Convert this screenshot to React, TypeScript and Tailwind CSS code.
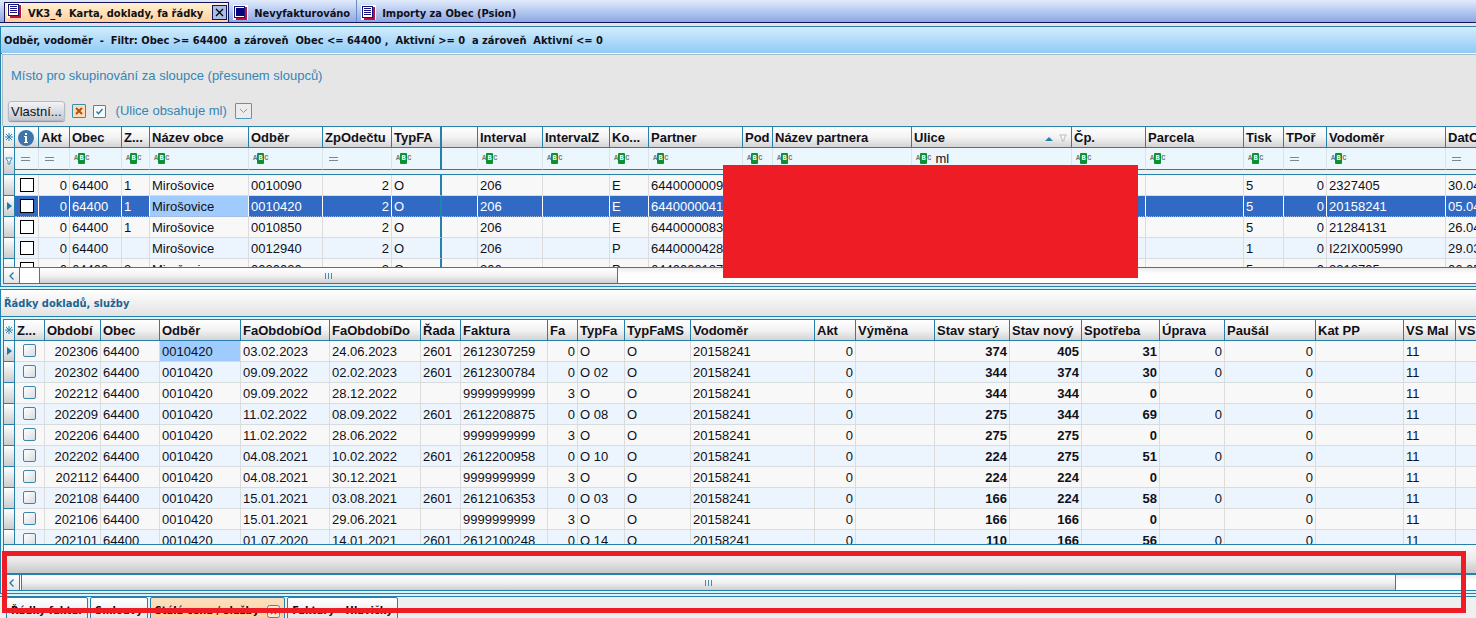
import { useState } from "react";
import { clsx } from "clsx";

type Column = {
    key: string;
    title: string;
    width: number;
    right?: boolean;
    bold?: boolean;
    filter?: "abc" | "eq";
};

type Row = Record<string, string>;

const INDICATOR_WIDTH = 11;

const meterColumns: Column[] = [
    { key: "check", title: "", width: 24, filter: "eq" },
    { key: "akt", title: "Akt", width: 31, right: true, filter: "eq" },
    { key: "obec", title: "Obec", width: 52, filter: "abc" },
    { key: "z", title: "Z...", width: 28, filter: "abc" },
    { key: "nazev", title: "Název obce", width: 99, filter: "abc" },
    { key: "odber", title: "Odběr", width: 74, filter: "abc" },
    { key: "zp", title: "ZpOdečtu", width: 69, right: true, filter: "eq" },
    { key: "typ", title: "TypFA", width: 50, filter: "abc" },
    { key: "blank", title: "", width: 36 },
    { key: "interval", title: "Interval", width: 65, filter: "abc" },
    { key: "intervalZ", title: "IntervalZ", width: 67, filter: "abc" },
    { key: "ko", title: "Ko...", width: 39, filter: "abc" },
    { key: "partner", title: "Partner", width: 94, filter: "abc" },
    { key: "pod", title: "Pod", width: 30, filter: "abc" },
    { key: "nazevP", title: "Název partnera", width: 139, filter: "abc" },
    { key: "ulice", title: "Ulice", width: 160, filter: "abc" },
    { key: "cp", title: "Čp.", width: 74, filter: "abc" },
    { key: "parcela", title: "Parcela", width: 98, filter: "abc" },
    { key: "tisk", title: "Tisk", width: 40, filter: "abc" },
    { key: "tpor", title: "TPoř", width: 43, right: true, filter: "eq" },
    { key: "vodomer", title: "Vodoměr", width: 119, filter: "abc" },
    { key: "dat", title: "DatO", width: 80, filter: "eq" },
];

const meter = (z: string, odber: string, ko: string, partner: string, tisk: string, vodomer: string, dat: string): Row => ({
    akt: "0", obec: "64400", nazev: "Mirošovice", zp: "2", typ: "O", interval: "206", tpor: "0",
    z, odber, ko, partner, tisk, vodomer, dat,
});

const meterRows: Row[] = [
    meter("1", "0010090", "E", "6440000009", "5", "2327405", "30.04"),
    meter("1", "0010420", "E", "6440000041", "5", "20158241", "05.04"),
    meter("1", "0010850", "E", "6440000083", "5", "21284131", "26.04"),
    meter("", "0012940", "P", "6440000428", "1", "I22IX005990", "29.03"),
    meter("2", "0020020", "P", "6440000127", "5", "2312795", "06.05"),
];

const lineColumns: Column[] = [
    { key: "check", title: "Z...", width: 30 },
    { key: "obdobi", title: "Období", width: 56, right: true },
    { key: "obec", title: "Obec", width: 59 },
    { key: "odber", title: "Odběr", width: 81 },
    { key: "od", title: "FaObdobíOd", width: 89 },
    { key: "do", title: "FaObdobíDo", width: 91 },
    { key: "rada", title: "Řada", width: 40 },
    { key: "faktura", title: "Faktura", width: 87 },
    { key: "fa", title: "Fa", width: 30, right: true },
    { key: "typ", title: "TypFa", width: 47 },
    { key: "typMS", title: "TypFaMS", width: 66 },
    { key: "vodomer", title: "Vodoměr", width: 124 },
    { key: "akt", title: "Akt", width: 41, right: true },
    { key: "vymena", title: "Výměna", width: 79 },
    { key: "stary", title: "Stav starý", width: 75, right: true, bold: true },
    { key: "novy", title: "Stav nový", width: 72, right: true, bold: true },
    { key: "spotreba", title: "Spotřeba", width: 78, right: true, bold: true },
    { key: "uprava", title: "Úprava", width: 65, right: true },
    { key: "pausal", title: "Paušál", width: 91, right: true },
    { key: "kat", title: "Kat PP", width: 88 },
    { key: "vsMal", title: "VS Mal", width: 52 },
    { key: "vs", title: "VS", width: 60 },
];

// rows without an invoice series are readings that were not billed yet
const line = (obdobi: string, od: string, to: string, faktura: string, typ: string, stary: string, novy: string, spotreba: string): Row => {
    const billed = faktura !== "9999999999";
    return {
        obec: "64400", odber: "0010420", typMS: "O", vodomer: "20158241", akt: "0", pausal: "0", vsMal: "11",
        rada: billed ? "2601" : "",
        fa: billed ? "0" : "3",
        uprava: billed ? "0" : "",
        obdobi, od, do: to, faktura, typ, stary, novy, spotreba,
    };
};

const lineRows: Row[] = [
    line("202306", "03.02.2023", "24.06.2023", "2612307259", "O", "374", "405", "31"),
    line("202302", "09.09.2022", "02.02.2023", "2612300784", "O 02", "344", "374", "30"),
    line("202212", "09.09.2022", "28.12.2022", "9999999999", "O", "344", "344", "0"),
    line("202209", "11.02.2022", "08.09.2022", "2612208875", "O 08", "275", "344", "69"),
    line("202206", "11.02.2022", "28.06.2022", "9999999999", "O", "275", "275", "0"),
    line("202202", "04.08.2021", "10.02.2022", "2612200958", "O 10", "224", "275", "51"),
    line("202112", "04.08.2021", "30.12.2021", "9999999999", "O", "224", "224", "0"),
    line("202108", "15.01.2021", "03.08.2021", "2612106353", "O 03", "166", "224", "58"),
    line("202106", "15.01.2021", "29.06.2021", "9999999999", "O", "166", "166", "0"),
    line("202101", "01.07.2020", "14.01.2021", "2612100248", "O 14", "110", "166", "56"),
];

const tahoma = "font-['DejaVu_Sans_Condensed','DejaVu_Sans',sans-serif] text-[11px] font-bold whitespace-pre";

function DocIcon({ filled }: { filled?: boolean }) {
    return (
        <svg width="15" height="15" viewBox="0 0 15 15" shapeRendering="crispEdges" className="shrink-0" aria-hidden="true">
            <rect x="0" y="0" width="15" height="15" fill="#fff" />
            <path d="M13 2v12H3" fill="none" stroke="#c0103a" strokeWidth="2" />
            <rect x="1.5" y="1.5" width="10" height="11" fill="#fff" stroke="#14147c" />
            {filled ? (
                <rect x="3" y="3" width="8" height="8" fill="#06067a" />
            ) : (
                <path d="M3 3.5h7M3 5.5h7M3 7.5h7M3 9.5h7" stroke="#14147c" />
            )}
        </svg>
    );
}

function StarIcon() {
    return (
        <svg width="8" height="8" viewBox="0 0 8 8" className="mx-auto" aria-hidden="true">
            <path d="M4 0v8M0 4h8M1 1l6 6M7 1L1 7" stroke="#2b86bd" />
        </svg>
    );
}

function InfoIcon() {
    return (
        <svg width="16" height="16" viewBox="0 0 16 16" className="-ml-[2px]" aria-hidden="true">
            <circle cx="8" cy="8" r="8" fill="#3a75ad" />
            <rect x="7" y="3" width="2" height="2" fill="#fff" />
            <path d="M6 6h3v6h1v1H6v-1h1V7H6z" fill="#fff" />
        </svg>
    );
}

function FunnelIcon({ color }: { color: string }) {
    return (
        <svg width="8" height="8" viewBox="0 0 8 8" className="shrink-0" aria-hidden="true">
            <path d="M0.800 1h6.400L5 4.200V7H3V4.200z" fill="#fff" stroke={color} />
        </svg>
    );
}

function CurrentRowMark() {
    return (
        <svg width="5" height="8" viewBox="0 0 5 8" className="mx-auto" aria-hidden="true">
            <path d="M0 0l5 4-5 4z" fill="#1a7ba8" />
        </svg>
    );
}

function ContainsIcon() {
    return (
        <span aria-hidden="true" className="flex shrink-0 items-center font-['Liberation_Mono',monospace] text-[7px] leading-none font-bold text-[#6b7b7b]">
            A<span className="flex h-[11px] w-[7px] items-center justify-center rounded-[1px] bg-[#0c9030] text-white">B</span>C
        </span>
    );
}

function EqualsIcon() {
    return <span aria-hidden="true" className="ml-[2px] h-[4px] w-[9px] shrink-0 border-y border-[#7c8890]" />;
}

function Grip() {
    return <span className="h-[6px] w-[7px] bg-[repeating-linear-gradient(90deg,#3b8dbd_0px,#3b8dbd_1px,transparent_1px,transparent_3px)]" />;
}

function ScrollBar({ offset, size, rest }: { offset: number; size: number; rest: number }) {
    return (
        <div className="flex h-[15px] shrink-0 bg-white">
            <button aria-label="Posunout vlevo" className="flex w-4 items-center justify-center border-r border-[#2b80b0] bg-linear-to-b from-white to-[#e4e4e4]">
                <svg width="5" height="8" viewBox="0 0 5 8" aria-hidden="true">
                    <path d="M4.500 0.500L1 4l3.500 3.500" fill="none" stroke="#1f78a8" strokeWidth="1.300" />
                </svg>
            </button>
            <div className="shrink-0" style={{ width: offset }} />
            <div className="flex basis-0 items-center justify-center border-x border-[#2b80b0] bg-linear-to-b from-white via-[#f1f1f1] to-[#cfcfcf]" style={{ flexGrow: size }}>
                <Grip />
            </div>
            <div className="basis-0 bg-linear-to-b from-[#ececec] to-white to-40%" style={{ flexGrow: rest }} />
        </div>
    );
}

const headCell = "h-[22px] overflow-hidden border-y border-r border-[#2580ac] bg-linear-to-b from-white via-[#f3f3f3] to-[#d4d4d4] px-[2px] pt-[2px] pb-0 text-left font-bold text-[#101018]";
const indicator = "border-r border-b border-[#2580ac] bg-linear-to-b from-white to-[#cdcdcd] p-0";

function Grid({ columns, rows, current, focusKey, filters, thickAfter, label }: {
    columns: Column[];
    rows: Row[];
    current: number;
    focusKey: string;
    filters?: boolean;
    thickAfter?: string;
    label: string;
}) {
    const [ulice, setUlice] = useState("ml");
    const total = columns.reduce((sum, c) => sum + c.width, INDICATOR_WIDTH);

    return (
        <table aria-label={label} className="table-fixed border-separate border-spacing-0 whitespace-nowrap text-[13px] leading-[18px]" style={{ width: total }}>
            <colgroup>
                <col style={{ width: INDICATOR_WIDTH }} />
                {columns.map(c => <col key={c.key} style={{ width: c.width }} />)}
            </colgroup>
            <thead>
                <tr>
                    <th className="border-y border-r border-[#2580ac] bg-linear-to-b from-white to-[#e2e2e2] p-0"><StarIcon /></th>
                    {columns.map(c => (
                        <th key={c.key} className={clsx(headCell, c.key === thickAfter && "border-r-2")}>
                            {filters && c.key === "check" ? (
                                <span className="flex justify-center"><InfoIcon /></span>
                            ) : filters && c.key === "ulice" ? (
                                <span className="flex items-center justify-between">
                                    {c.title}
                                    <span className="flex items-start gap-[6px] pr-[2px]">
                                        <svg width="8" height="8" viewBox="0 0 8 8" aria-hidden="true"><path d="M0 7l4-4 4 4z" fill="#2580ac" /></svg>
                                        <FunnelIcon color="#b8b8b8" />
                                    </span>
                                </span>
                            ) : c.title}
                        </th>
                    ))}
                </tr>
                {filters && (
                    <>
                        <tr>
                            <td rowSpan={2} className={indicator}><span className="flex justify-center"><FunnelIcon color="#3a8fc4" /></span></td>
                            {columns.map(c => (
                                <td key={c.key} className={clsx("h-[22px] border-r border-b border-b-[#2580ac] bg-[#ecf6fd] p-0", c.key === thickAfter ? "border-r-2 border-r-[#2580ac]" : "border-r-[#dbe3ea]")}>
                                    <span className="flex items-center gap-1 pl-1">
                                        {c.filter === "abc" && <ContainsIcon />}
                                        {c.filter === "eq" && <EqualsIcon />}
                                        {c.key === "ulice" && (
                                            <input aria-label="Filtr Ulice" value={ulice} onChange={e => setUlice(e.target.value)} className="h-5 w-full min-w-0 bg-transparent outline-none" />
                                        )}
                                    </span>
                                </td>
                            ))}
                        </tr>
                        <tr>
                            <td colSpan={columns.length} className="h-[5px] border-b border-[#2580ac] bg-[#eef1f2] p-0" />
                        </tr>
                    </>
                )}
            </thead>
            <tbody>
                {rows.map((r, i) => {
                    const selected = filters && i === current;
                    return (
                        <tr key={r.faktura + r.odber + r.obdobi} className={clsx(selected ? "bg-[#316ac5] text-white" : i % 2 ? "bg-[#ecf5fd] text-[#101018]" : "bg-[#f8f8f8] text-[#101018]")}>
                            <td className={indicator}>{i === current && <CurrentRowMark />}</td>
                            {columns.map(c => (
                                <td
                                    key={c.key}
                                    className={clsx(
                                        "h-[21px] overflow-hidden border-b px-[2px]",
                                        c.key !== "check" ? "pt-[2px] pb-0" : filters ? "py-0" : "pt-0 pb-[2px]",
                                        c.right && "text-right",
                                        c.bold && "font-bold",
                                        selected ? "border-b-[#9db2d8] [border-bottom-style:dotted]" : "border-b-[#d8dcdc]",
                                        c.key === thickAfter ? "border-r-2 border-r-[#2580ac]" : selected ? "border-r border-r-white" : "border-r border-r-[#dcdcdc]",
                                        i === current && c.key === focusKey && "bg-[#9fcbff] text-[#101018]"
                                    )}
                                >
                                    {c.key === "check" ? (
                                        <input
                                            type="checkbox"
                                            aria-label={"Vybrat řádek " + (i + 1)}
                                            className={clsx(
                                                "mx-auto block appearance-none border",
                                                filters
                                                    ? "size-[14px] border-black bg-white checked:bg-[#316ac5]"
                                                    : "size-[13px] rounded-[2px] border-[#3c86b0] bg-linear-to-br from-white to-[#d8dde0] checked:bg-[#316ac5]"
                                            )}
                                        />
                                    ) : r[c.key]}
                                </td>
                            ))}
                        </tr>
                    );
                })}
            </tbody>
        </table>
    );
}

const bottomTabs = ["Řádky faktur", "Smlouvy", "Stálá cena / služby", "Faktury - Hlavičky"];

export default function App() {
    const [bottomTab, setBottomTab] = useState(2);

    return (
        <div className="relative flex h-screen flex-col overflow-hidden bg-[#d9f3fb] font-['Liberation_Sans',Arial,sans-serif] text-[13px] text-[#101018]">
            {/* Window tabs */}
            <nav className={clsx(tahoma, "flex h-[23px] shrink-0 border-b border-[#14145a] bg-linear-to-b from-[#e2ebfb] to-[#8ba8e4] pl-1")}>
                <div className="mt-[2px] flex items-center border-x border-t border-[#14145a] bg-linear-to-b from-[#fff0d4] to-[#ffd09a] pr-px pl-[2px]">
                    <button className="flex gap-[6px]"><DocIcon /><span className="pt-[3px] leading-[16px]">VK3_4  Karta, doklady, fa řádky</span></button>
                    <button aria-label="Zavřít" className="ml-[9px] flex size-[15px] items-center justify-center border border-[#14145a] bg-[#a9bfe8]">
                        <svg width="9" height="9" viewBox="0 0 9 9" aria-hidden="true"><path d="M1 1l7 7M8 1L1 8" stroke="#000" strokeWidth="1.300" /></svg>
                    </button>
                </div>
                <button className="flex gap-[6px] border-r border-[#7088c0] pt-[5px] pr-[6px] pl-1"><DocIcon filled /><span className="leading-[18px]">Nevyfakturováno</span></button>
                <button className="flex gap-[6px] px-1 pt-[5px]"><DocIcon /><span className="leading-[18px]">Importy za Obec (Psion)</span></button>
            </nav>
            <div className="h-[3px] shrink-0 bg-[#f0dfe0]" />

            {/* Meters */}
            <section className="shrink-0 border-l border-[#2580ac]">
                <h1 className={clsx(tahoma, "border-y border-[#2580ac] bg-linear-to-b from-[#d3edfc] to-[#8fcaf6] pt-[2px] pl-[3px] leading-[24px]")}>
                    Odběr, vodoměr  -  Filtr: Obec &gt;= 64400  a zároveň  Obec &lt;= 64400 ,  Aktivní &gt;= 0  a zároveň  Aktivní &lt;= 0
                </h1>
                <div className="ml-[1px] h-[72px] border-t border-l border-[#a9bcc8] bg-[#e6e6e6] pt-[11px] pl-2 text-[#3585b5] shadow-[0_-1px_0_#fff]">
                    <p className="leading-5">Místo pro skupinování za sloupce (přesunem sloupců)</p>
                    <div className="-ml-[3px] mt-[15px] flex items-center">
                        <button className="h-5 rounded-[3px] border border-[#b4bac4] bg-linear-to-b from-[#f4f4f6] to-[#c4c8d2] px-[2px] text-[#101018] shadow-[0_1px_1px_#8b93a3]">Vlastní...</button>
                        <button aria-label="Zrušit filtr" className="ml-[7px] flex size-[14px] items-center justify-center rounded-[1px] border border-[#3c8ab0] bg-[#fbdcb8]">
                            <svg width="8" height="8" viewBox="0 0 8 8" aria-hidden="true"><path d="M1 1l6 6M7 1L1 7" stroke="#b0510c" strokeWidth="2" /></svg>
                        </button>
                        <label className="ml-[7px] flex items-center gap-[10px]">
                            <span className="grid size-[13px] place-items-center">
                                <input type="checkbox" defaultChecked className="peer col-start-1 row-start-1 size-[13px] appearance-none rounded-[1px] border border-[#3c8ab0] bg-[#f4fafd]" />
                                <svg width="9" height="9" viewBox="0 0 9 9" className="invisible col-start-1 row-start-1 peer-checked:visible" aria-hidden="true"><path d="M1.500 4.500l2 2.200L7.500 2" fill="none" stroke="#2878a0" strokeWidth="1.400" /></svg>
                            </span>
                            (Ulice obsahuje ml)
                        </label>
                        <button aria-label="Další filtry" className="ml-2 flex h-4 w-[17px] items-center justify-center rounded-[1px] border border-[#4a9cc4] bg-[#ececec]">
                            <svg width="9" height="6" viewBox="0 0 9 6" aria-hidden="true"><path d="M1 1l3.500 3.500L8 1" fill="none" stroke="#909898" /></svg>
                        </button>
                    </div>
                </div>
                <div className="ml-[2px] border-b border-l border-[#2580ac]">
                    <div className="h-[142px] overflow-hidden border-b border-[#2580ac]">
                        <Grid label="Odběr, vodoměr" columns={meterColumns} rows={meterRows} current={1} focusKey="nazev" thickAfter="typ" filters />
                    </div>
                    <ScrollBar offset={19} size={577} rest={859} />
                </div>
                <div className="h-[3px] border-b border-[#2580ac] bg-[#e4e4ea]" />
            </section>
            <div className="h-[2px] shrink-0 bg-[#c9f5fb]" />

            {/* Document lines */}
            <section className="flex min-h-0 flex-1 flex-col border-t border-l border-[#2580ac]">
                <h2 className={clsx(tahoma, "border-b border-[#2580ac] bg-linear-to-b from-white to-[#e2e2e2] pt-[2px] pl-[3px] leading-[24px] text-[#1c6494]")}>Řádky dokladů, služby</h2>
                <div className="mt-[2px] ml-[2px] flex min-h-0 flex-1 flex-col border-b border-l border-[#2580ac]">
                    <div className="min-h-0 flex-1 overflow-hidden border-b border-[#2580ac]">
                        <Grid label="Řádky dokladů, služby" columns={lineColumns} rows={lineRows} current={0} focusKey="odber" />
                    </div>
                    <div className="h-[30px] shrink-0 border-b-2 border-[#2580ac] bg-linear-to-b from-[#fafafa] via-[#ececec] to-[#c8c8c8]" />
                    <ScrollBar offset={1} size={1376} rest={80} />
                </div>
                <div className="h-[3px] shrink-0 border-b border-[#2580ac] bg-[#d9f3fb]" />
            </section>

            <div className={clsx(tahoma, "mt-[2px] flex h-[22px] shrink-0 items-start gap-[2px] overflow-hidden border-t border-[#2580ac] bg-[#efefef] pl-[6px]")}>
                {bottomTabs.map((t, i) => (
                    <button
                        key={t}
                        onClick={() => setBottomTab(i)}
                        className={clsx(
                            "flex h-[28px] items-center gap-2 rounded-t-[2px] border border-[#2580ac] px-1",
                            i === bottomTab ? "bg-linear-to-b from-[#fce0c0] to-[#fbcd98]" : "bg-linear-to-b from-white to-[#e0e0e0]"
                        )}
                    >
                        {t}
                        {i === bottomTab && (
                            <svg width="13" height="13" viewBox="0 0 13 13" aria-hidden="true">
                                <rect x="0.500" y="0.500" width="12" height="12" rx="2" fill="#fbe6cf" stroke="#3c8ab0" />
                                <path d="M4 4l5 5M9 4l-5 5" stroke="#b0510c" strokeWidth="1.500" />
                            </svg>
                        )}
                    </button>
                ))}
            </div>

            {/* Redaction and highlight over the grids */}
            <div className="absolute top-[165px] left-[723px] h-[113px] w-[415px] bg-[#ee1c24]" />
            <div className="pointer-events-none absolute right-[10px] bottom-[5px] left-[2px] h-[62px] border-5 border-[#ee1c24]" />
        </div>
    );
}
